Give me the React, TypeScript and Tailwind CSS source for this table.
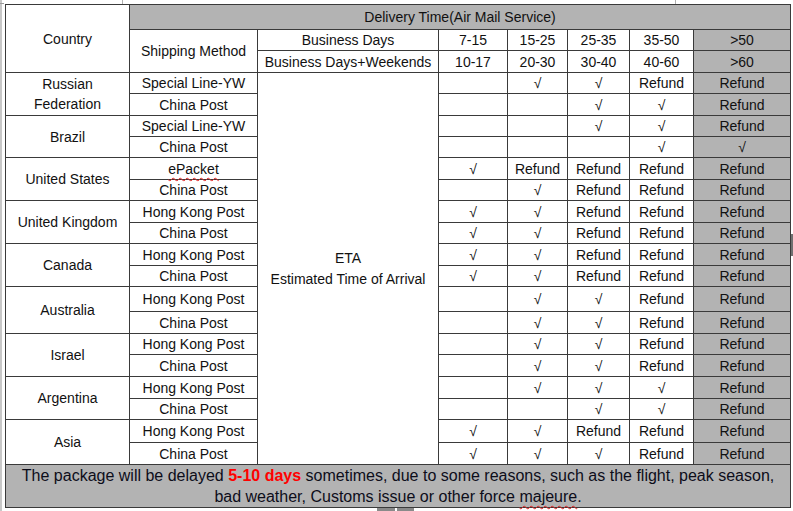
import React from "react";

const cols = ["7-15", "15-25", "25-35", "35-50", ">50"];

type Method = { name: string; cells: string[]; h: string; wavy?: boolean };
type Group = { country: React.ReactNode; methods: Method[] };

const GROUPS: Group[] = [
  {
    country: (
      <>
        Russian
        <br />
        Federation
      </>
    ),
    methods: [
      { name: "Special Line-YW", cells: ["", "√", "√", "Refund", "Refund"], h: "h-[21px]" },
      { name: "China Post", cells: ["", "", "√", "√", "Refund"], h: "h-[22px]" },
    ],
  },
  {
    country: "Brazil",
    methods: [
      { name: "Special Line-YW", cells: ["", "", "√", "√", "Refund"], h: "h-[21px]" },
      { name: "China Post", cells: ["", "", "", "√", "√"], h: "h-[21px]" },
    ],
  },
  {
    country: "United States",
    methods: [
      { name: "ePacket", cells: ["√", "Refund", "Refund", "Refund", "Refund"], h: "h-[22px]", wavy: true },
      { name: "China Post", cells: ["", "√", "Refund", "Refund", "Refund"], h: "h-[21px]" },
    ],
  },
  {
    country: "United Kingdom",
    methods: [
      { name: "Hong Kong Post", cells: ["√", "√", "Refund", "Refund", "Refund"], h: "h-[22px]" },
      { name: "China Post", cells: ["√", "√", "Refund", "Refund", "Refund"], h: "h-[21px]" },
    ],
  },
  {
    country: "Canada",
    methods: [
      { name: "Hong Kong Post", cells: ["√", "√", "Refund", "Refund", "Refund"], h: "h-[22px]" },
      { name: "China Post", cells: ["√", "√", "Refund", "Refund", "Refund"], h: "h-[21px]" },
    ],
  },
  {
    country: "Australia",
    methods: [
      { name: "Hong Kong Post", cells: ["", "√", "√", "Refund", "Refund"], h: "h-[25px]" },
      { name: "China Post", cells: ["", "√", "√", "Refund", "Refund"], h: "h-[22px]" },
    ],
  },
  {
    country: "Israel",
    methods: [
      { name: "Hong Kong Post", cells: ["", "√", "√", "Refund", "Refund"], h: "h-[21px]" },
      { name: "China Post", cells: ["", "√", "√", "Refund", "Refund"], h: "h-[22px]" },
    ],
  },
  {
    country: "Argentina",
    methods: [
      { name: "Hong Kong Post", cells: ["", "√", "√", "√", "Refund"], h: "h-[22px]" },
      { name: "China Post", cells: ["", "", "√", "√", "Refund"], h: "h-[21px]" },
    ],
  },
  {
    country: "Asia",
    methods: [
      { name: "Hong Kong Post", cells: ["√", "√", "Refund", "Refund", "Refund"], h: "h-[23px]" },
      { name: "China Post", cells: ["√", "√", "√", "Refund", "Refund"], h: "h-[22px]" },
    ],
  },
];

const td = "border border-[#3a3a3a] p-0 text-center align-middle";
const gray = "bg-[#b3b3b3]";

export default function App() {
  let first = true;
  return (
    <div className="relative w-[793px] h-[511px] overflow-hidden bg-white text-[14px] leading-[20px] text-[#111] font-['Liberation_Sans',Arial,sans-serif]">
      {/* word page edge markers */}
      <div className="absolute left-0 top-0 w-[2px] h-[511px] bg-[#c8c8c8]" />
      <div className="absolute left-0 top-[3px] w-[4px] h-px bg-[#9a9a9a]" />
      <div className="absolute left-[122px] top-0 w-px h-[4px] bg-[#b0b0b0]" />
      <div className="absolute left-[675px] top-0 w-px h-[4px] bg-[#b0b0b0]" />
      <div className="absolute left-[791px] top-[234px] w-[2px] h-[22px] bg-[#707070]" />
      <div className="absolute left-[377px] top-[508px] w-[18px] h-[3px] bg-[#8a8a8a]" />
      <div className="absolute left-[397px] top-[508px] w-[17px] h-[3px] bg-[#8a8a8a]" />

      <table className="ml-[5px] mt-[4px] w-[785px] table-fixed border-collapse">
        <colgroup>
          <col className="w-[124px]" />
          <col className="w-[128px]" />
          <col className="w-[181px]" />
          <col className="w-[69px]" />
          <col className="w-[60px]" />
          <col className="w-[62px]" />
          <col className="w-[64px]" />
          <col className="w-[97px]" />
        </colgroup>
        <tbody>
          <tr className="h-[25px]">
            <td rowSpan={3} className={td}>
              Country
            </td>
            <td colSpan={7} className={`${td} ${gray}`}>
              Delivery Time(Air Mail Service)
            </td>
          </tr>
          <tr className="h-[21px]">
            <td rowSpan={2} className={td}>
              Shipping Method
            </td>
            <td className={td}>Business Days</td>
            {["7-15", "15-25", "25-35", "35-50"].map((c) => (
              <td key={c} className={td}>
                {c}
              </td>
            ))}
            <td className={`${td} ${gray}`}>&gt;50</td>
          </tr>
          <tr className="h-[22px]">
            <td className={td}>Business Days+Weekends</td>
            {["10-17", "20-30", "30-40", "40-60"].map((c) => (
              <td key={c} className={td}>
                {c}
              </td>
            ))}
            <td className={`${td} ${gray}`}>&gt;60</td>
          </tr>

          {GROUPS.map((g, gi) =>
            g.methods.map((m, mi) => {
              const showEta = first;
              first = false;
              return (
                <tr key={`${gi}-${mi}`} className={m.h}>
                  {mi === 0 && (
                    <td rowSpan={2} className={td}>
                      {g.country}
                    </td>
                  )}
                  <td className={td}>
                    {m.wavy ? (
                      <span className="underline decoration-wavy decoration-[#e02020] decoration-1 underline-offset-[3px]">
                        {m.name}
                      </span>
                    ) : (
                      m.name
                    )}
                  </td>
                  {showEta && (
                    <td rowSpan={18} className={`${td} leading-[21px]`}>
                      ETA
                      <br />
                      Estimated Time of Arrival
                    </td>
                  )}
                  {m.cells.map((c, ci) => (
                    <td key={cols[ci]} className={`${td} ${ci === 4 ? gray : ""}`}>
                      {c}
                    </td>
                  ))}
                </tr>
              );
            })
          )}

          <tr className="h-[41px]">
            <td colSpan={8} className={`${td} ${gray} text-[16px] leading-[21px] text-[#0d0d1a]`}>
              The package will be delayed <b className="text-[#ff0000]">5-10 days</b> sometimes, due to some reasons,
              such as the flight, peak season,
              <br />
              bad weather, Customs issue or other force{" "}
              <span className="underline decoration-wavy decoration-[#e02020] decoration-1 underline-offset-[3px]">
                majeure
              </span>
              .
            </td>
          </tr>
        </tbody>
      </table>
    </div>
  );
}
